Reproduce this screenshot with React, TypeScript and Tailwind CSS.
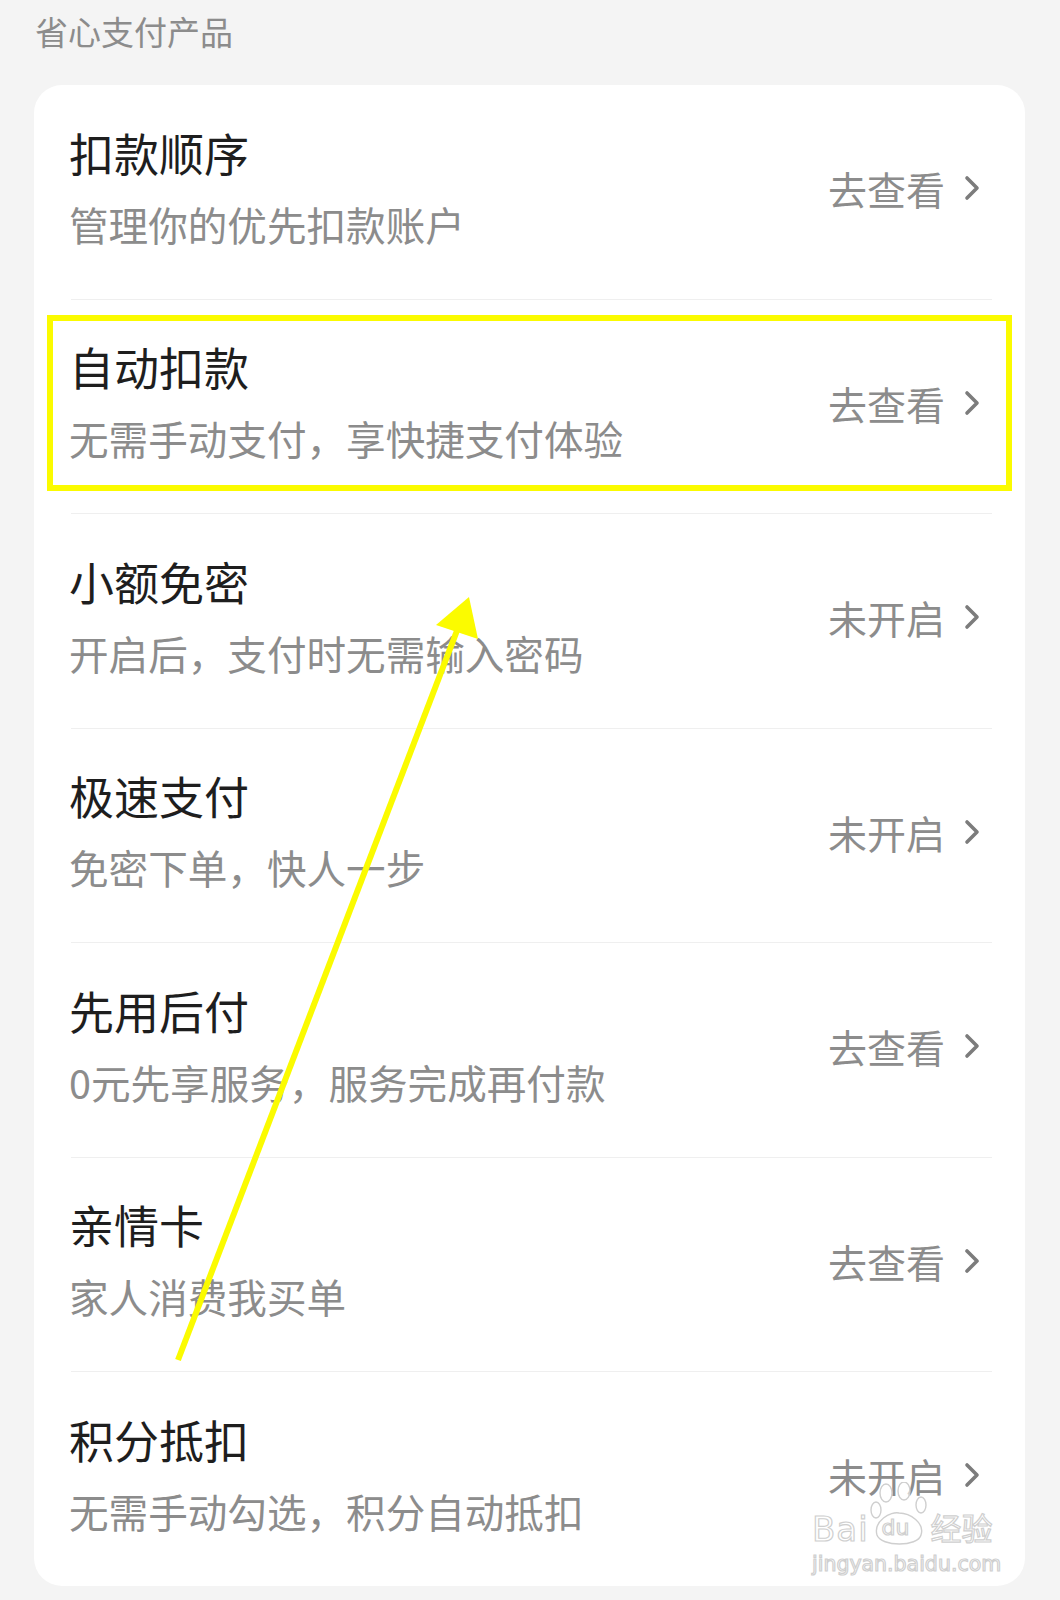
import React from 'react';

type Item = { title: string; desc: string; action: string };

const items: Item[] = [
  { title: '扣款顺序', desc: '管理你的优先扣款账户', action: '去查看' },
  { title: '自动扣款', desc: '无需手动支付，享快捷支付体验', action: '去查看' },
  { title: '小额免密', desc: '开启后，支付时无需输入密码', action: '未开启' },
  { title: '极速支付', desc: '免密下单，快人一步', action: '未开启' },
  { title: '先用后付', desc: '0元先享服务，服务完成再付款', action: '去查看' },
  { title: '亲情卡', desc: '家人消费我买单', action: '去查看' },
  { title: '积分抵扣', desc: '无需手动勾选，积分自动抵扣', action: '未开启' },
];

function Chevron() {
  return (
    <svg width="18" height="26" viewBox="0 0 18 26" className="ml-[18px]">
      <polyline points="4,3 14,13 4,23" fill="none" stroke="#7c7c7c" strokeWidth="3.6" strokeLinecap="round" strokeLinejoin="round" />
    </svg>
  );
}

function Row({ item, last }: { item: Item; last: boolean }) {
  return (
    <div>
      <div className="flex h-[213.5px] items-center justify-between pb-[7px] pl-[35px] pr-[44px]">
        <div className="flex flex-col">
          <div className="text-[45px] leading-[50px] text-[#1e1e1e]">{item.title}</div>
          <div className="mt-[21px] text-[39.6px] leading-[50px] text-[#8c8c8c]">{item.desc}</div>
        </div>
        <div className="flex items-center text-[39px] leading-[50px] text-[#8c8c8c]">
          <span>{item.action}</span>
          <Chevron />
        </div>
      </div>
      {!last && <div className="ml-[37px] mr-[33px] h-px bg-[#efefef]" />}
    </div>
  );
}

function Watermark() {
  return (
    <div className="absolute left-[812px] top-[1482px] flex flex-col items-start font-['DejaVu_Sans','Noto_Sans_CJK_SC',sans-serif] text-white/60 [-webkit-text-stroke:1.2px_#cfcfcf]">
      <div className="flex items-end">
        <span className="text-[34px] leading-[38px] tracking-[1px]">Bai</span>
        <div className="relative h-[66px] w-[60px]">
          <svg width="60" height="66" viewBox="0 0 60 66" className="absolute left-0 top-0">
            <g fill="rgba(255,255,255,0.6)" stroke="#cfcfcf" strokeWidth="1.4">
              <ellipse cx="17" cy="11" rx="6" ry="9" />
              <ellipse cx="35" cy="9" rx="6" ry="9" />
              <ellipse cx="7" cy="28" rx="5" ry="8" />
              <ellipse cx="52" cy="23" rx="5" ry="8" />
              <path d="M8 53 C4 39 22 29 30 31 C41 31 56 41 52 53 C49 65 12 65 8 53 Z" />
            </g>
          </svg>
          <span className="absolute bottom-[8px] left-[13px] text-[22px] leading-[24px]">du</span>
        </div>
        <span className="ml-[2px] text-[31px] leading-[38px]">经验</span>
      </div>
      <div className="mt-[4px] text-[20.5px] leading-[24px]">jingyan.baidu.com</div>
    </div>
  );
}

export default function App() {
  return (
    <div className="relative h-[1600px] w-[1060px] overflow-hidden bg-[#f4f4f4] font-['Noto_Sans_CJK_SC','Noto_Sans',sans-serif]">
      <div className="flex h-[85px] items-start pl-[35px] pt-[10px]">
        <span className="text-[33px] leading-[42px] text-[#8c8c8c]">省心支付产品</span>
      </div>

      <div className="ml-[34px] mr-[35px] overflow-hidden rounded-[28px] bg-white">
        {items.map((item, i) => (
          <Row key={item.title} item={item} last={i === items.length - 1} />
        ))}
      </div>

      {/* annotation: highlight box */}
      <div className="absolute left-[47px] top-[315px] h-[176px] w-[965px] border-[6px] border-[#fbfb00]" />

      {/* annotation: arrow */}
      <svg className="absolute left-0 top-0" width="1060" height="1600" viewBox="0 0 1060 1600">
        <line x1="178" y1="1360" x2="458" y2="628" stroke="#fbfb00" strokeWidth="6" />
        <polygon points="469,597 436,625 478,639" fill="#fbfb00" />
      </svg>

      <Watermark />
    </div>
  );
}
